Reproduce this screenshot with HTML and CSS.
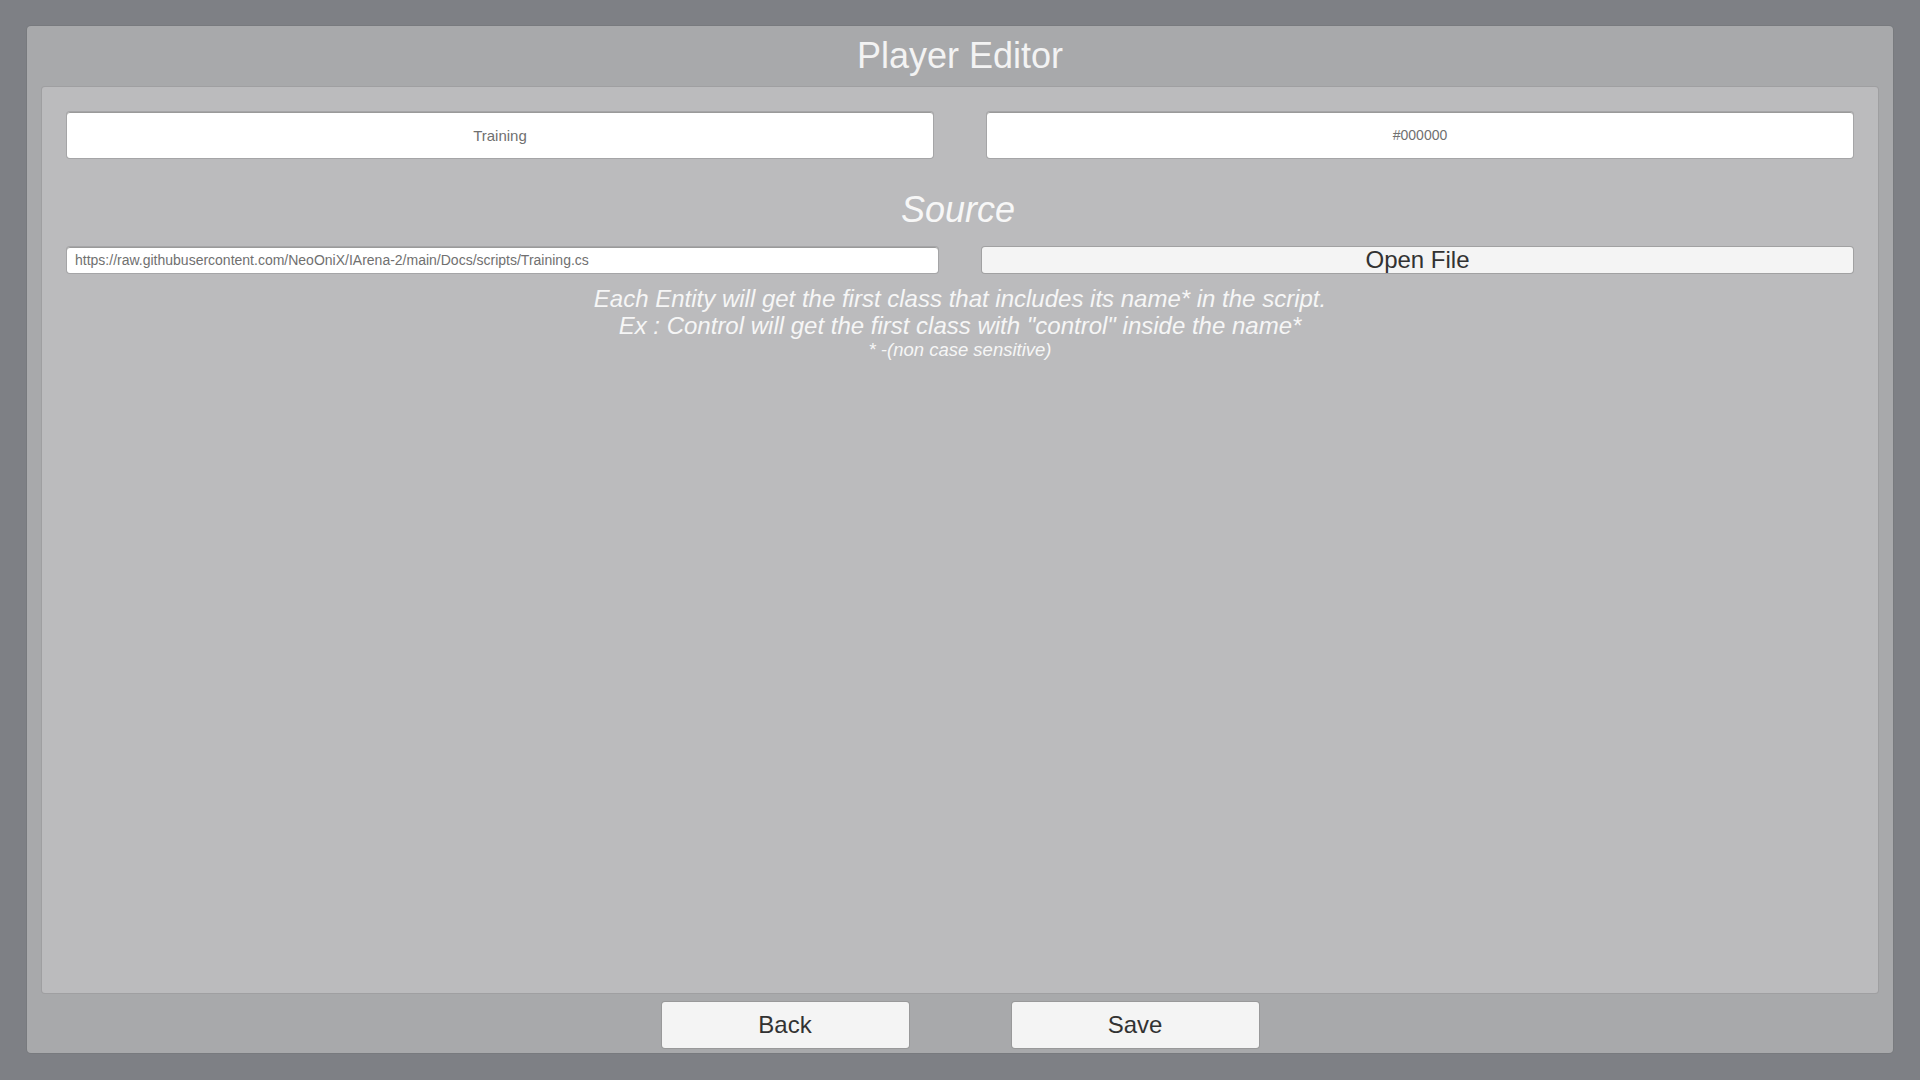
FILE: index.html
```html
<!DOCTYPE html>
<html>
<head>
<meta charset="utf-8">
<link rel="stylesheet" href="styles.css">
</head>
<body>
<div class="window">
  <div class="title">Player Editor</div>
  <div class="content">
    <div class="row-top">
      <div class="field field-big">Training</div>
      <div class="field field-big field-small-text">#000000</div>
    </div>
    <div class="heading">Source</div>
    <div class="row-src">
      <div class="field field-url">https://raw.githubusercontent.com/NeoOniX/IArena-2/main/Docs/scripts/Training.cs</div>
      <div class="btn btn-open">Open File</div>
    </div>
    <div class="note">
      <div class="note-line">Each Entity will get the first class that includes its name* in the script.</div>
      <div class="note-line">Ex : Control will get the first class with "control" inside the name*</div>
      <div class="note-small">* -(non case sensitive)</div>
    </div>
  </div>
  <div class="footer">
    <div class="btn btn-foot">Back</div>
    <div class="btn btn-foot">Save</div>
  </div>
</div>
</body>
</html>
```
FILE: styles.css
```css
html, body {
  margin: 0;
  padding: 0;
}
body {
  width: 1920px;
  height: 1080px;
  background: #7e8085;
  font-family: "Liberation Sans", Arial, sans-serif;
  box-sizing: border-box;
  padding: 26px 27px 27px 27px;
  overflow: hidden;
}
.window {
  height: 1027px;
  background: #a8a9ab;
  border-radius: 4px;
  box-shadow: 0 0 0 1px rgba(110, 112, 116, 0.35);
  display: flex;
  flex-direction: column;
}
.title {
  height: 61px;
  line-height: 60px;
  text-align: center;
  color: #f3f3f3;
  font-size: 36px;
}
.content {
  margin: 0 15px;
  height: 906px;
  box-sizing: border-box;
  background: #bbbbbd;
  border-radius: 3px;
  box-shadow: 0 0 0 1px rgba(150, 150, 152, 0.5);
  padding: 25px;
}
.row-top {
  display: grid;
  grid-template-columns: 1fr 1fr;
  column-gap: 54px;
}
.field {
  background: #ffffff;
  border-radius: 3px;
  box-shadow: inset 0 1px 0 #9a9a9a, 0 0 0 1px rgba(140, 140, 140, 0.45);
  color: #707070;
}
.field-big {
  height: 46px;
  line-height: 47px;
  text-align: center;
  font-size: 15px;
}
.field-small-text {
  font-size: 14px;
}
.heading {
  margin-top: 31px;
  height: 40px;
  line-height: 42px;
  text-align: center;
  font-style: italic;
  font-size: 36px;
  color: #f7f7f7;
  margin-bottom: 18px;
  padding-right: 4px;
}
.row-src {
  display: grid;
  grid-template-columns: 1fr 1fr;
  column-gap: 44px;
}
.field-url {
  height: 26px;
  line-height: 27px;
  font-size: 14px;
  padding-left: 8px;
  white-space: nowrap;
  overflow: hidden;
}
.btn {
  background: #f4f4f4;
  border-radius: 3px;
  box-shadow: 0 0 0 1px rgba(140, 140, 140, 0.55);
  color: #323232;
  text-align: center;
}
.btn-open {
  height: 26px;
  line-height: 26px;
  font-size: 24px;
}
.note {
  margin-top: 12px;
  text-align: center;
  color: #f6f6f6;
  font-style: italic;
}
.note-line {
  font-size: 24px;
  line-height: 27px;
}
.note-small {
  font-size: 18.5px;
  line-height: 22px;
}
.footer {
  flex: 1;
  display: flex;
  justify-content: center;
  gap: 103px;
  padding-top: 9px;
}
.btn-foot {
  width: 247px;
  height: 46px;
  line-height: 46px;
  font-size: 24px;
}
```
